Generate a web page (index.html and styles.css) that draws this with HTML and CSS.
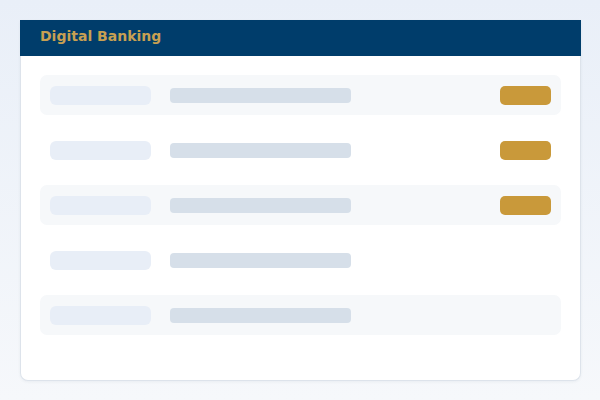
FILE: index.html
```html
<!DOCTYPE html>
<html>
<head>
<meta charset="utf-8">
<link rel="stylesheet" href="styles.css">
</head>
<body>
<div class="card">
  <div class="header">Digital Banking</div>
  <div class="list">
    <div class="row shaded"><span class="label"></span><span class="value"></span><span class="btn"></span></div>
    <div class="row"><span class="label"></span><span class="value"></span><span class="btn"></span></div>
    <div class="row shaded"><span class="label"></span><span class="value"></span><span class="btn"></span></div>
    <div class="row"><span class="label"></span><span class="value"></span></div>
    <div class="row shaded"><span class="label"></span><span class="value"></span></div>
  </div>
</div>
</body>
</html>
```
FILE: styles.css
```css
html, body {
  margin: 0;
  padding: 0;
}
body {
  width: 600px;
  height: 400px;
  padding: 20px;
  box-sizing: border-box;
  background: linear-gradient(180deg, #e9eff8 0%, #f6f8fb 100%);
  font-family: "DejaVu Sans", sans-serif;
}
.card {
  width: 561px;
  height: 361px;
  box-sizing: border-box;
  background: #ffffff;
  border: 1px solid #dde3eb;
  border-top: none;
  border-radius: 0 0 8px 8px;
  box-shadow: 0 1px 3px rgba(40, 60, 90, 0.06);
  display: flex;
  flex-direction: column;
}
.header {
  height: 36px;
  margin: 0 -1px;
  background: #003d6b;
  color: #c8a052;
  font-weight: bold;
  font-size: 14px;
  display: flex;
  align-items: center;
  padding-left: 20px;
  padding-bottom: 5px;
  box-sizing: border-box;
}
.list {
  padding: 19px 19px 0 19px;
  display: flex;
  flex-direction: column;
  gap: 15px;
}
.row {
  height: 40px;
  border-radius: 7px;
  display: flex;
  align-items: center;
  padding: 0 10px 0 10px;
}
.row.shaded {
  background: #f6f8fa;
}
.label {
  width: 101px;
  height: 19px;
  border-radius: 6px;
  background: #e8eef7;
}
.value {
  width: 181px;
  height: 15px;
  border-radius: 4px;
  background: #d6dfe9;
  margin-left: 19px;
}
.btn {
  width: 51px;
  height: 19px;
  border-radius: 5px;
  background: #c9993a;
  margin-left: auto;
}
```
